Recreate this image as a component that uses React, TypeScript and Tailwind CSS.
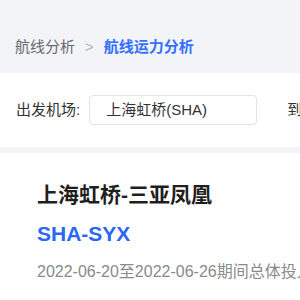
const font = "font-['Liberation_Sans','Noto_Sans_CJK_SC',sans-serif]";

export default function App() {
  return (
    <div className={`${font} h-[300px] w-[300px] overflow-hidden bg-[#f3f4f7]`}>
      <div className="flex h-[73px] items-start whitespace-nowrap pl-[15px] pt-[37px] text-[15px] leading-[20px]">
        <span className="text-[#666a70]">航线分析</span>
        <span className="mx-[10px] text-[#b0b3b8]">&gt;</span>
        <span className="font-bold text-[#3370ff]">航线运力分析</span>
      </div>

      <div className="flex h-[74px] items-center whitespace-nowrap bg-white pl-4 text-[15px]">
        <span className="text-[#333]">出发机场:</span>
        <div className="ml-[9px] flex h-[30px] w-[168px] shrink-0 items-center rounded border border-[#e1e4ea] pl-4 text-[#333]">
          上海虹桥(SHA)
        </div>
        <span className="ml-[30px] text-[#333]">到达机场:</span>
      </div>

      <div className="mt-[6px] h-[200px] whitespace-nowrap bg-white pl-[37px] pt-[28px]">
        <div className="text-[21px] font-bold leading-[28px] text-[#1f1f1f]">上海虹桥-三亚凤凰</div>
        <div className="mt-[10px] text-[21px] font-bold leading-[30px] text-[#2c66f5]">SHA-SYX</div>
        <div className="mt-[11px] text-[16px] leading-[24px] text-[#8a8a8a]">
          2022-06-20至2022-06-26期间总体投入运力
        </div>
      </div>
    </div>
  );
}
